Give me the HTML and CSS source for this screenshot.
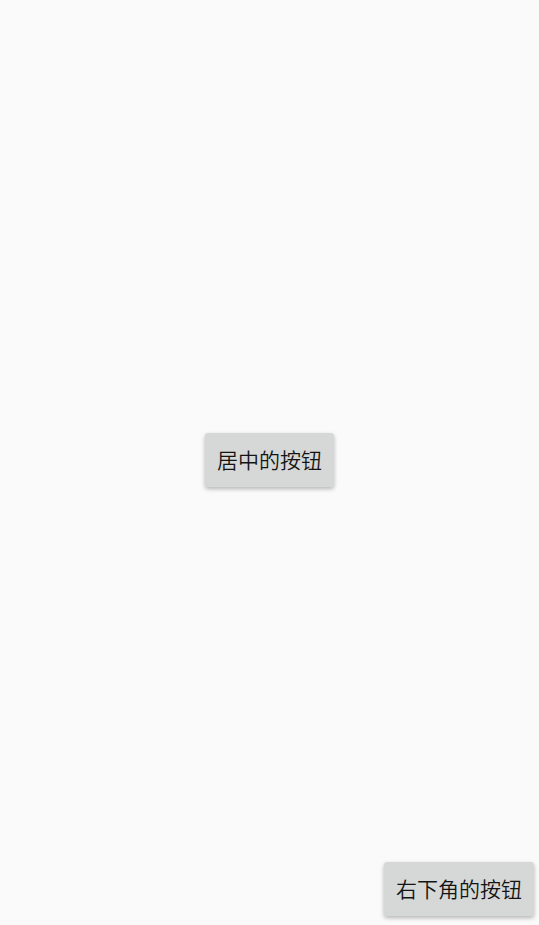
FILE: index.html
```html
<!DOCTYPE html>
<html lang="zh-CN">
<head>
  <meta charset="UTF-8" />
  <meta name="viewport" content="width=device-width, initial-scale=1.0"/>
  <title>按钮布局</title>
  <link rel="stylesheet" href="styles.css">
</head>
<body>
  <main class="layout">
    <button class="btn btn-center" type="button">居中的按钮</button>
    <button class="btn btn-corner" type="button">右下角的按钮</button>
  </main>
</body>
</html>
```

FILE: styles.css
```css
body {
  background: #fafafa;
  font-family: "Noto Sans CJK SC", sans-serif;
  color: #141414;
  margin: 0;
}
/* both buttons share one cell, each aligned on its own */
.layout {
  display: grid;
  box-sizing: border-box;
  min-height: 100vh;
  padding: 4px 5px 9px;
}
.btn {
  grid-area: 1 / 1;
  background: #d6d8d7;
  border: none;
  border-radius: 3px;
  box-shadow: 0 2px 4px rgba(0, 0, 0, 0.28);
  padding: 11px 12px 13px;
  color: inherit;
  font-family: inherit;
  font-size: 21px;
  font-weight: 350;
  line-height: 30px;
  cursor: pointer;
}
.btn:active {
  background: #c4c5c5;
}
.btn-center {
  place-self: center;
}
.btn-corner {
  place-self: end;
}
```
